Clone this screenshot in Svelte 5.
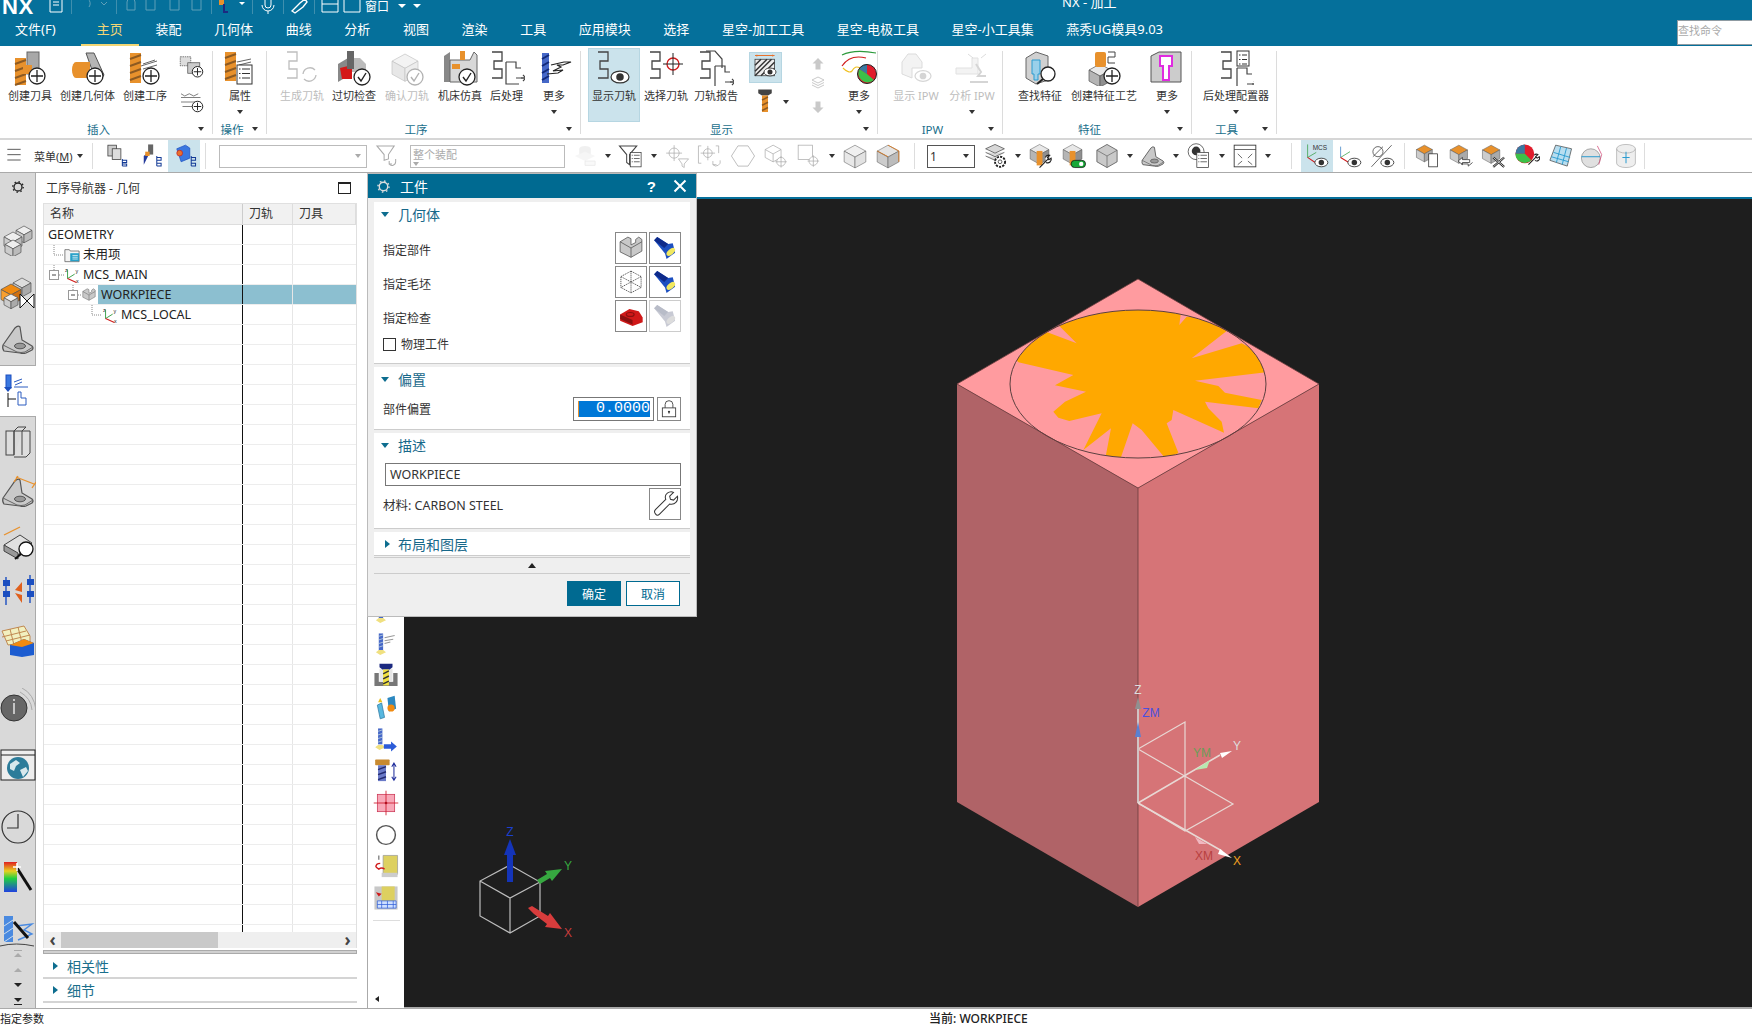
<script>
	// shared pieces for the icon table, everything is drawn on a 36x36 box
	const plus = (x = 25, y = 26, r = 8) =>
		`<circle cx="${x}" cy="${y}" r="${r}" fill="#fff" stroke="#222" stroke-width="1.3"/><path d="M${x - r + 2} ${y}h${2 * r - 4}M${x} ${y - r + 2}v${2 * r - 4}" stroke="#222" stroke-width="1.3"/>`;
	const ok = (x = 26, y = 27, r = 8) =>
		`<circle cx="${x}" cy="${y}" r="${r}" fill="#fff" stroke="#222" stroke-width="1.3"/><path d="M${x - 4} ${y}l3 4 5-8" fill="none" stroke="#222" stroke-width="1.4"/>`;
	const eye = (x = 25, y = 28, r = 9, c = '#333') =>
		`<ellipse cx="${x}" cy="${y}" rx="${r}" ry="${r * 0.66}" fill="#fff" stroke="${c}" stroke-width="1.2"/><circle cx="${x}" cy="${y}" r="${r * 0.42}" fill="${c}"/>`;
	const drill = (x, y, w, h, c = '#e8912c', d = '#8d5a22') => {
		let s = `<rect x="${x}" y="${y}" width="${w}" height="${h}" fill="${c}"/>`;
		for (let i = 2; i < h - 2; i += 7) {
			s += `<path d="M${x} ${y + i + 4}L${x + w} ${y + i}" stroke="${d}" stroke-width="2"/>`;
		}
		return s;
	};
	const zig = (x = 2, y = 1, s = 1) =>
		`<path transform="translate(${x} ${y}) scale(${s})" d="M1 1h10v9H3v8h8v9H1" fill="none" stroke="#444" stroke-width="1.3"/>`;
	const box = (x, y, s, t = '#e8e8e8', l = '#b5b5b5', r = '#8f8f8f') =>
		`<path d="M${x} ${y}l${s} ${s * 0.55}-${s} ${s * 0.55}-${s}-${s * 0.55}z" fill="${t}" stroke="#555" stroke-width=".7"/><path d="M${x - s} ${y + s * 0.55}v${s}l${s} ${s * 0.55}v-${s}z" fill="${l}" stroke="#555" stroke-width=".7"/><path d="M${x + s} ${y + s * 0.55}v${s}l-${s} ${s * 0.55}v-${s}z" fill="${r}" stroke="#555" stroke-width=".7"/>`;
	const wire = (x, y, s, c = '#444') =>
		`<path d="M${x} ${y}l${s} ${s * 0.55}v${s}l-${s} ${s * 0.55}-${s}-${s * 0.55}v-${s}zM${x - s} ${y + s * 0.55}l${s} ${s * 0.55}l${s}-${s * 0.55}M${x} ${y + s * 1.1}v${s}" fill="none" stroke="${c}" stroke-width="1"/>`;
	const list = (x, y, w = 13, h = 17) =>
		`<rect x="${x}" y="${y}" width="${w}" height="${h}" fill="#fff" stroke="#333"/><path d="M${x + 5} ${y + 4}h${w - 7}M${x + 5} ${y + 8.5}h${w - 7}M${x + 5} ${y + 13}h${w - 7}M${x + 2} ${y + 4}h1.5M${x + 2} ${y + 8.5}h1.5M${x + 2} ${y + 13}h1.5" stroke="#333"/>`;
	const page = (x, y) =>
		`<path d="M${x} ${y}h10v6h5M${x + 15} ${y + 16}l6-0M${x} ${y}v22h13" fill="none" stroke="#444" stroke-width="1.2"/><path d="M${x + 10} ${y + 16}h10m-3-3l3 3-3 3" fill="none" stroke="#444" stroke-width="1.2"/>`;
	const bracket = `<path d="M3 24L15 7q3-3 5-1l2 13 10 6q2 2 0 4l-6 3q-3 1-6 0L4 30q-2-2-1-6z" fill="#c9c9c9" stroke="#555" stroke-width="1.2"/><path d="M3 24l14 7q4 1 8 0l8-5" fill="none" stroke="#666"/><ellipse cx="20" cy="25" rx="5.5" ry="2.8" fill="#999" stroke="#555"/>`;
	const torch = (body = '#1c4fc0', dark = '#0e2a8a', face = '#f1e860') =>
		`<path d="M4 8l4-4 14 9 6-1 3 12-11 8-2-7z" fill="${body}"/><path d="M4 8l4-4 14 9-5 5z" fill="${dark}"/><ellipse cx="25.5" cy="23" rx="6.5" ry="3.5" transform="rotate(-40 25.5 23)" fill="${face}"/>`;
	const axesPart = `<path d="M8 26V6M8 26l16-10" stroke="#2c9a3c" stroke-width="2" fill="none"/><path d="M8 26l20 9" stroke="#d01c1c" stroke-width="2.4"/><g font-family="Liberation Sans" font-size="12" fill="#222"><text x="2" y="11">z</text><text x="26" y="14">y</text><text x="27" y="35">x</text></g>`;

	const icons = {
		createTool: drill(3, 8, 11, 27) + `<rect x="15" y="2" width="12" height="22" fill="#a8a8a8" stroke="#666"/><rect x="11" y="15" width="9" height="9" fill="#e8912c"/>` + plus(),
		createGeom: `<path d="M16 3h8l10 22-7 9z" fill="#b5b5b5" stroke="#555"/><path d="M6 12h14v16H6a4 8 0 010-16z" fill="#e8912c"/>` + plus(),
		createOp: drill(3, 3, 11, 30) + `<path d="M14 16l16-5M16 19l14-4M16 14l12-4" stroke="#666"/>` + plus(24, 26),
		addA: `<rect x="3" y="5" width="14" height="12" fill="#ddd" stroke="#555" stroke-dasharray="2 1"/><rect x="13" y="13" width="16" height="14" fill="#ccc" stroke="#555"/>` + plus(26, 25, 7),
		addB: `<path d="M4 9l5 3 6-3 6 3 6-3M4 14h26M4 20h26M6 26h16" fill="none" stroke="#555"/>` + plus(26, 26, 7),
		attr: drill(3, 2, 11, 29) + `<path d="M15 12l14-3M17 15l12-3" stroke="#666"/>` + list(15, 15, 15, 19),
		genPath: zig(2, 1) + `<path d="M19 24a7 7 0 0112-4m1 5a7 7 0 01-12 4" fill="none" stroke="#444" stroke-width="1.3"/>`,
		gouge: `<path d="M2 14l10-6v18l-10 6z" fill="#888"/><path d="M12 8h12l6 6v8H12z" fill="#bbb"/><path d="M4 18l12-3v14H6z" fill="#d41818"/><rect x="11" y="1" width="7" height="18" fill="#666"/>` + ok(),
		verify: box(16, 4, 13, '#ddd', '#bbb', '#ccc') + ok(),
		machine: `<path d="M2 6l6-4v30H2z" fill="#888"/><path d="M8 10h20l4-8 3 3v27H8z" fill="#d8d8d8" stroke="#666"/><rect x="18" y="1" width="5" height="9" fill="#e8912c"/><rect x="10" y="14" width="8" height="5" fill="#e8912c"/>` + ok(25, 27),
		post: zig(2, 1) + page(17, 12),
		more: drill(6, 3, 7, 30, '#4668c8', '#122a7a') + `<path d="M15 15l13-3h7l-8 3h-6l4 2-8 4 10-1-5 3-11 1" fill="none" stroke="#222" stroke-width="1.2"/>`,
		showPath: zig(1, 1) + eye(24, 27),
		selPath: zig(1, 1) + `<circle cx="25" cy="14" r="6" fill="none" stroke="#d01c1c" stroke-width="1.3"/><path d="M15 14h20M25 3v22" stroke="#222"/>`,
		report: zig(1, 1) + `<path d="M8 1h9l7 8v9" fill="none" stroke="#444" stroke-width="1.2"/>` + page(17, 16),
		viewHatch: `<path d="M4 2h26" stroke="#e8712c" stroke-width="1.4"/><path d="M4 2l3-1.5v3zM30 2l-3-1.5v3z" fill="#e8712c"/><rect x="4" y="7" width="26" height="22" fill="#eee" stroke="#333"/><path d="M4 15l8-8M4 23l16-16M4 29l22-22M12 29l18-18M20 29l10-10" stroke="#333" stroke-width="2"/>` + eye(24, 24, 8),
		toolSmall: `<path d="M7 2h18v5l-5 3H12l-5-3z" fill="#444"/>` + drill(12, 10, 8, 22),
		upArrow: `<path d="M18 4l11 11h-6v12H13V15H7z" fill="#c9c9c9"/>`,
		downArrow: `<path d="M18 32L7 21h6V9h10v12h6z" fill="#c9c9c9"/>`,
		layersGrey: `<path d="M18 6l12 6-12 6-12-6zM6 17l12 6 12-6M6 22l12 6 12-6" fill="none" stroke="#bbb" stroke-width="1.6"/>`,
		morePie: `<path d="M1 5q12-6 34-2" fill="none" stroke="#2c9a3c" stroke-width="1.2"/><path d="M1 16q8-12 24-8" fill="none" stroke="#d01c1c" stroke-width="1.2"/><path d="M2 18q6 6 9 3 3-6 8-3" fill="none" stroke="#f0c020" stroke-width="1.2"/><circle cx="26" cy="24" r="9.5" fill="#e01c2c"/><path d="M26 24L18 19a9.5 9.5 0 018-5z" fill="#3a78a0"/><path d="M26 24L18 19a9.5 9.5 0 0015 11z" fill="#3cc048"/><circle cx="26" cy="24" r="9.5" fill="none" stroke="#222"/>`,
		showIpw: `<path d="M4 24V12l6-8h8l6 8v6H14v10z" fill="#ddd" stroke="#999"/>` + eye(25, 26, 8, '#888'),
		analyseIpw: `<path d="M2 18h16V8h6v16H2z" fill="#ddd" stroke="#aaa"/><path d="M14 4l5 4M32 4l-5 4" stroke="#999"/><path d="M22 14l5 8-3 4h8M16 32h18" fill="none" stroke="#888" stroke-width="2"/>`,
		findFeat: `<path d="M4 8l10-6 12 4v24L14 34 4 28z" fill="#d0d0d0" stroke="#666"/><path d="M10 10h8v14h-2v6h-4v-6h-2z" fill="#9ad0ea" stroke="#2c9cd0"/><circle cx="26" cy="24" r="7" fill="#fff" stroke="#222" stroke-width="1.3"/><path d="M21 29l-6 5" stroke="#222" stroke-width="2"/>`,
		createFeat: box(14, 14, 11) + `<rect x="9" y="2" width="11" height="15" rx="2" fill="#e8912c"/><path d="M22 2h7v5h-7v6h7" fill="none" stroke="#444"/>` + plus(26, 26, 8),
		moreFeat: `<path d="M2 6l8-4h22v30H2z" fill="#ccc" stroke="#555"/><path d="M11 6h12v10h-3v14h-6V16h-3z" fill="#fff" stroke="#e02ce0" stroke-width="2"/>`,
		postConf: zig(2, 1) + list(19, 1, 12, 15) + page(19, 18),
		menu: `<path d="M2 8h20M2 16h20M2 24h20" stroke="#333" stroke-width="1.2"/>`,
		navA: `<rect x="4" y="3" width="12" height="15" fill="#ccc" stroke="#333"/><rect x="10" y="8" width="12" height="15" fill="#ddd" stroke="#333"/><path d="M24 22v10M24 24h6v3h-6M24 29h6v3h-6" fill="none" stroke="#123a96" stroke-width="1.4"/>`,
		navB: `<path d="M8 18l7-6v4l-7 14z" fill="#243a9a"/><rect x="14" y="2" width="7" height="14" fill="#666"/><rect x="10" y="12" width="6" height="6" fill="#e8912c"/><path d="M26 18v14M26 20h6v4h-6M26 28h6v4h-6" fill="none" stroke="#123a96" stroke-width="1.4"/>`,
		navC: `<path d="M8 8l12-5 6 4v14l-12 5z" fill="#3a78e0" stroke="#1c4fc0"/><circle cx="12" cy="14" r="4" fill="#e8712c" stroke="#c82020"/><path d="M28 18v14M28 20h6v4h-6M28 28h6v4h-6" fill="none" stroke="#123a96" stroke-width="1.4"/>`,
		funnelRe: `<path d="M4 4h24L20 16v6l-6 2v-8z" fill="none" stroke="#aaa" stroke-width="1.4"/><path d="M30 22v4a5 5 0 01-9 3m0-4v4h4" fill="none" stroke="#aaa" stroke-width="1.4"/>`,
		cylGrey: `<path d="M10 8a8 4 0 0116 0v10H10z" fill="#d5d5d5"/><path d="M4 18l14-6 14 6-14 7z" fill="#e4e4e4"/><path d="M18 25h14v6H18z" fill="#eee" stroke="#bbb"/>`,
		funnelList: `<path d="M2 4h24L16 16v14l-4-3V16z" fill="#fff" stroke="#444" stroke-width="1.4"/>` + list(17, 13, 15, 20),
		targetFunnel: `<circle cx="14" cy="14" r="7" fill="none" stroke="#aaa"/><path d="M3 14h22M14 3v22M20 22h14l-6 7v5l-3-2v-3z" fill="none" stroke="#aaa"/>`,
		targetUndo: `<path d="M6 4H2v24h4M26 4h4v10" fill="none" stroke="#aaa"/><circle cx="15" cy="14" r="6" fill="none" stroke="#aaa"/><path d="M5 14h20M15 4v20M32 24a6 6 0 01-10 6m0-5v5h5" fill="none" stroke="#aaa"/>`,
		hexa: `<path d="M11 4h14l9 14-9 14H11L2 18z" fill="none" stroke="#bbb" stroke-width="1.3"/>`,
		cubeTarget: wire(14, 3, 11, '#aaa') + `<circle cx="25" cy="26" r="6" fill="#fff" stroke="#aaa"/><path d="M17 26h16M25 18v16" stroke="#aaa"/>`,
		squareTarget: `<rect x="3" y="3" width="20" height="20" fill="none" stroke="#aaa"/><circle cx="24" cy="25" r="6" fill="#fff" stroke="#aaa"/><path d="M16 25h16M24 17v16" stroke="#aaa"/>`,
		glassCube: box(18, 3, 15, '#f0f0f0', '#e8e8e8', '#e2e2e2'),
		isoCube: box(18, 3, 15, '#e4e4e4', '#ccc', '#bcbcbc') + `<path d="M18 3l15 8v15M18 19L3 11" fill="none" stroke="#d87820" stroke-width="1.2"/>`,
		layerGear: `<path d="M18 2l13 6-13 6-13-6zM5 13l13 6 13-6M5 18l13 6 8-4" fill="#d8d8d8" stroke="#444" stroke-width="1"/><circle cx="25" cy="26" r="7" fill="#fff" stroke="#222" stroke-width="2.6" stroke-dasharray="3 1.6"/><circle cx="25" cy="26" r="2.6" fill="#fff" stroke="#222"/>`,
		holeWrench: box(16, 2, 13) + `<rect x="12" y="11" width="8" height="20" fill="#e8912c"/><path d="M16 34l12-12M24 20a5 5 0 016-3l-3 3 2 3 3-2a5 5 0 01-7 6" fill="#fff" stroke="#222" stroke-width="1.6"/>`,
		holeGreen: box(16, 2, 13) + `<rect x="12" y="11" width="8" height="20" fill="#e8912c"/><rect x="14" y="24" width="20" height="10" rx="5" fill="#18a838" stroke="#111"/><circle cx="28" cy="29" r="3" fill="#fff"/>`,
		hexSolid: `<path d="M18 2l14 8v16l-14 8-14-8V10z" fill="#c9c9c9" stroke="#444"/><path d="M4 10l14 8 14-8M18 18v16" fill="none" stroke="#666"/>`,
		bracket,
		eyeList: `<circle cx="14" cy="12" r="11" fill="#fff" stroke="#333"/><circle cx="14" cy="11" r="6" fill="#333"/>` + list(15, 13, 16, 21),
		fit: `<rect x="3" y="3" width="30" height="30" fill="#fff" stroke="#333" stroke-width="1.2"/><path d="M3 9h30M8 15l6 6M28 15l-6 6M8 30l6-5M28 30l-6-5" stroke="#333"/>`,
		mcsEye: `<path d="M5 2v18l12-7" fill="none" stroke="#2c9a3c"/><path d="M5 20l12 8" stroke="#d01c1c" stroke-width="1.4"/>` + eye(24, 27) + `<text x="12" y="10" font-size="9" font-family="Liberation Sans" fill="#333">MCS</text>`,
		wcsEye: `<path d="M5 5v15" stroke="#2c78c0"/><path d="M5 20l13-8" stroke="#2c9a3c"/><path d="M5 20l13 8" stroke="#d01c1c" stroke-width="1.4"/>` + eye(24, 27),
		slashEye: `<circle cx="11" cy="12" r="7" fill="none" stroke="#333"/><path d="M4 19L18 5M2 33L30 3" stroke="#333"/>` + eye(24, 27),
		cubeCopy: box(13, 3, 11, '#e8912c', '#ccc', '#aaa') + `<rect x="19" y="15" width="12" height="18" fill="#fff" stroke="#222"/>`,
		cubeSwap: box(15, 3, 12, '#e8912c', '#ccc', '#aaa') + `<path d="M14 25l6-5v3h10v4H20v3zM34 27l-6 5v-3H18" fill="#fff" stroke="#222"/>`,
		cubeDel: box(14, 3, 12, '#e8912c', '#ccc', '#aaa') + `<path d="M17 20l15 13M32 20L17 33" stroke="#222" stroke-width="3"/><path d="M17 20l15 13M32 20L17 33" stroke="#fff" stroke-width="1"/>`,
		pieWrench: `<circle cx="15" cy="15" r="13" fill="#e01c2c"/><path d="M15 15L15 2a13 13 0 00-13 13z" fill="#3a78a0"/><path d="M15 15H2a13 13 0 0022 9z" fill="#3cc048"/><path d="M20 30l10-10m-2-3a4 4 0 015-1l-3 3 2 2 3-2a4 4 0 01-6 5" fill="#fff" stroke="#222" stroke-width="1.5"/>`,
		surface: `<path d="M12 3l22 5-6 24-24-8z" fill="#b8def0" stroke="#444"/><path d="M9 13l23 7M6 19l24 7M19 5l-6 22M27 7l-6 23" stroke="#2c9cd0" stroke-width="1.3"/>`,
		sphere: `<circle cx="15" cy="21" r="13" fill="#e0e0e0" stroke="#888"/><path d="M2 19h26" stroke="#2c9cd0" stroke-width="1.4"/><path d="M24 4l6 12-4 14" fill="none" stroke="#d04070"/>`,
		cyl: `<path d="M5 8a13 6 0 0126 0v20a13 6 0 01-26 0z" fill="#eee" stroke="#aaa"/><path d="M5 8a13 6 0 0026 0" fill="none" stroke="#aaa"/><path d="M18 12v16M13 20h10" stroke="#2c9cd0" stroke-width="1.4"/>`,
		gear: `<circle cx="18" cy="18" r="8" fill="none" stroke="#222" stroke-width="2.6"/><circle cx="18" cy="18" r="10.5" fill="none" stroke="#222" stroke-width="2.6" stroke-dasharray="3 5.2"/>`,
		cubes: box(24, 6, 8, '#eee', '#ccc', '#bbb') + box(13, 12, 9, '#eee', '#ccc', '#bbb') + box(13, 20, 8, '#eee', '#ccc', '#bbb'),
		orangeCube: box(22, 2, 9, '#ddd', '#ccc', '#aaa') + box(11, 8, 10, '#f08a10', '#f8a030', '#d07010') + box(11, 18, 7, '#eee', '#ccc', '#aaa') + `<path d="M20 18l14 14V18L20 32z" fill="#fff" stroke="#111"/>`,
		navActive: `<rect x="6" y="2" width="5" height="13" fill="#3a78e0" stroke="#1c4fc0"/><path d="M8 19l-4-5h8z" fill="#1c4fc0"/><path d="M14 9l8-3M15 12l7-3M14 14h14" stroke="#2c5cc0"/><path d="M8 20v14M8 26h8" fill="none" stroke="#111"/><path d="M18 32V19h3v6h5v7z" fill="none" stroke="#2c5cc0"/>`,
		books: `<rect x="6" y="8" width="8" height="24" fill="#ddd" stroke="#444"/><path d="M14 8l4-4h8l-4 4H14zM14 32V8M22 8h8v22l-4 4H14" fill="#ddd" stroke="#444"/><path d="M22 8v24" stroke="#444"/>`,
		gageX: bracket + `<path d="M16 3l18 7M14 8l4-6M32 14l4-6" fill="none" stroke="#e8912c" stroke-width="1.3"/>`,
		gageLens: `<path d="M4 20l16-10 12 8-14 12z" fill="#e0e0e0" stroke="#444"/><path d="M4 20v6l14 8v-6z" fill="#999" stroke="#444"/><path d="M4 10l16-8" stroke="#e8912c" stroke-width="1.3"/><circle cx="26" cy="24" r="7" fill="#fff" stroke="#111" stroke-width="1.3"/><path d="M21 29l-6 5" stroke="#111" stroke-width="2"/>`,
		flow: `<path d="M6 4v28M30 2v28" stroke="#1c4fc0" stroke-width="1.4"/><rect x="3" y="7" width="7" height="6" fill="#1c4fc0"/><rect x="3" y="18" width="7" height="6" fill="#1c4fc0"/><rect x="27" y="6" width="7" height="6" fill="#1c4fc0"/><rect x="27" y="18" width="7" height="6" fill="#1c4fc0"/><path d="M22 9l-7 8 7 2zM15 20l7 2v8z" fill="#e0601c"/>`,
		tableBox: `<path d="M2 8l22-5 6 10v6L8 22z" fill="#f2f0c0" stroke="#c08850"/><path d="M2 14l24-6M6 18l24-6M10 6l4 16M18 4l4 16" stroke="#c08850"/><path d="M10 22l14-6 10 4v12L22 34l-12-2z" fill="#1c5cd0"/><path d="M10 22l14-6 10 4-12 4z" fill="#f08a10"/>`,
		info: `<circle cx="14" cy="20" r="13" fill="#666" stroke="#333"/><path d="M14 15v11M14 11v2" stroke="#ddd" stroke-width="1.6"/><path d="M20 4q11 6 12 18M22 0q12 6 14 22" fill="none" stroke="#aaa"/>`,
		globe: `<rect x="1" y="2" width="34" height="30" fill="#eee" stroke="#222"/><path d="M1 7h34" stroke="#222"/><circle cx="18" cy="20" r="11" fill="#2c7c9a"/><path d="M10 16l6-4 4 3-4 3-2 5-4-2zM20 22l6-3 2 4-5 6z" fill="#d8e8ec"/>`,
		clock: `<circle cx="18" cy="18" r="16" fill="none" stroke="#333" stroke-width="1.2"/><path d="M18 5v14H7" fill="none" stroke="#333" stroke-width="1.2"/>`,
		rainbow: `<defs><linearGradient id="rb" x2="0" y2="1"><stop offset="0" stop-color="#e02020"/><stop offset=".3" stop-color="#e8d020"/><stop offset=".55" stop-color="#20d040"/><stop offset="1" stop-color="#2040e0"/></linearGradient></defs><rect x="4" y="2" width="13" height="30" fill="url(#rb)"/><path d="M17 8l14 22" stroke="#111" stroke-width="3"/><path d="M17 3v8M13 7h8" stroke="#fff" stroke-width="1.6"/>`,
		wandPath: `<rect x="4" y="4" width="9" height="26" fill="#4a8ae0"/><path d="M4 30l9-6M4 22l9-6M4 14l9-6" stroke="#cde"/><path d="M16 14l16-2-8 6 8 4-14 6" fill="none" stroke="#4a8ae0" stroke-width="1.4"/><path d="M0 34q16-4 34 0" fill="none" stroke="#444"/><path d="M14 10l14 16" stroke="#111" stroke-width="3"/>`,
		wcMill: `<path d="M8 2h6v24H8z" fill="#4668c8"/><path d="M8 6l6-2M8 11l6-2M8 16l6-2M8 21l6-2" stroke="#cdd"/><path d="M16 8l14-3M16 12l12-2M16 16l8-2" stroke="#999" stroke-width="1.4"/><path d="M4 28l6 4 8-4-4-3H8z" fill="#f0e080"/>`,
		pocketDrill: `<path d="M2 14h6v12h20V14h6v18H2z" fill="#777"/><rect x="9" y="8" width="18" height="18" fill="#e6e6e6"/><path d="M9 1h18v5l-4 3H13L9 6z" fill="#1c2a80"/>` + drill(14, 9, 8, 22, '#f0e040', '#333'),
		tiltTool: `<path d="M6 14l6-3 4 20-6 2z" fill="#58b8e0" stroke="#2c78a0"/><path d="M20 4l10-3 2 18-10 4z" fill="#2c88c0"/><circle cx="25" cy="18" r="5" fill="#f08a10"/><path d="M10 4l3 6H7z" fill="#e8c020"/>`,
		millArrow: `<path d="M7 2h6v22H7z" fill="#4668c8"/><path d="M7 6l6-2M7 11l6-2M7 16l6-2M7 21l6-2" stroke="#cdd"/><path d="M3 28l6 4 8-4-4-3H7z" fill="#f0e080"/><path d="M15 24h10v-4l8 7-8 7v-4H15z" fill="#2c5cd8"/>`,
		toolHeight: `<rect x="3" y="2" width="20" height="8" rx="1" fill="#c88a30"/>` + drill(7, 10, 11, 22, '#6a7ac8', '#222a70') + `<path d="M29 8v22M26 12l3-5 3 5M26 26l3 5 3-5" fill="none" stroke="#1c2a9a" stroke-width="1.4"/>`,
		crosshair: `<rect x="6" y="6" width="24" height="24" fill="#f8a8b8" stroke="#c83050"/><path d="M1 18h34M18 1v34" stroke="#d01c30" stroke-width="1.2"/><circle cx="18" cy="18" r="1.8" fill="#b01020"/>`,
		ring: `<circle cx="18" cy="18" r="13" fill="#fff" stroke="#555" stroke-width="2"/>`,
		machBack: `<path d="M14 2h20v26H14z" fill="#ddd060" stroke="#999"/><path d="M12 26h22v6H12z" fill="#ccc"/><path d="M8 2v6" stroke="#888" stroke-width="2"/><path d="M4 18q0-5 6-5M4 18l4 3q4-3 8 0" fill="none" stroke="#d01c1c" stroke-width="2"/>`,
		machGrid: `<rect x="2" y="2" width="32" height="32" fill="#c8c8c8"/><path d="M12 2h18v20H12z" fill="#ddd060"/><path d="M6 22h26v10H6z" fill="#cfe0ff" stroke="#2c5cd8"/><path d="M12 22v10M20 22v10M28 22v10M6 27h26" stroke="#2c5cd8"/><path d="M4 10l8 2-4 4" fill="#d01c1c"/>`,
		partCube: `<path d="M4 10l10-6 4 2v8l6-3V7l4-3 4 3v15l-14 8-14-7z" fill="#c9c9c9" stroke="#555"/><path d="M4 10l14 8v12M18 18l14-8" fill="none" stroke="#555"/>`,
		wireCube: `<path d="M18 4l13 7v14l-13 7-13-7V11zM5 11l26 14M31 11L5 25M18 4v28" fill="none" stroke="#333" stroke-dasharray="1.6 1"/>`,
		torchBlue: torch(),
		torchGrey: torch('#c8cad4', '#b8bcc8', '#dcdcdc'),
		redPart: `<path d="M4 16l12-7 12 3 5 8v6l-13 5-16-7z" fill="#d01818"/><path d="M4 16l16 7v6L4 22z" fill="#8a1010"/><ellipse cx="17" cy="16" rx="5" ry="2.5" fill="none" stroke="#8a1010" stroke-width="1.6"/>`,
		wrench: `<path d="M6 31q-3-3 0-6l13-13q-2-5 2-8t8-1l-5 5 1 4 4 1 5-5q1 5-2 8t-8 2L11 31q-3 3-5 0z" fill="#fff" stroke="#333" stroke-width="1.3"/>`,
		lock: `<path d="M11 16v-6a7 7 0 0114 0v6" fill="none" stroke="#333" stroke-width="1.5"/><rect x="6" y="16" width="24" height="16" fill="#fff" stroke="#333" stroke-width="1.5"/><circle cx="18" cy="23" r="2" fill="#333"/><path d="M18 24v3" stroke="#333"/>`,
		folder: `<path d="M2 6h10l2 3h20v24H2z" fill="#f4f4f4" stroke="#555" stroke-width="1.6"/><rect x="14" y="14" width="20" height="18" fill="#28a0c8"/><path d="M19 19h12M19 23h12M19 27h12" stroke="#fff" stroke-width="1.6"/>`,
		axes: axesPart
	};

	const ribbon = [
		{ label: '插入', w: 213, pad: 4, items: [
			{ n: 'createTool', t: '创建刀具', w: 52 },
			{ n: 'createGeom', t: '创建几何体', w: 63 },
			{ n: 'createOp', t: '创建工序', w: 52 },
			{ stack: ['addA', 'addB'], w: 40 }
		] },
		{ label: '操作', w: 54, pad: 0, items: [{ n: 'attr', t: '属性', w: 54, caret: true }] },
		{ label: '工序', w: 314, pad: 9, items: [
			{ n: 'genPath', t: '生成刀轨', w: 52, off: true },
			{ n: 'gouge', t: '过切检查', w: 52 },
			{ n: 'verify', t: '确认刀轨', w: 54, off: true },
			{ n: 'machine', t: '机床仿真', w: 52 },
			{ n: 'post', t: '后处理', w: 41 },
			{ n: 'more', t: '更多', w: 54, caret: true }
		] },
		{ label: '显示', w: 297, pad: 7, items: [
			{ n: 'showPath', t: '显示刀轨', w: 52, on: true },
			{ n: 'selPath', t: '选择刀轨', w: 52 },
			{ n: 'report', t: '刀轨报告', w: 48 },
			{ viewStack: true, w: 50 },
			{ arrows: true, w: 56 },
			{ n: 'morePie', t: '更多', w: 26, caret: true }
		] },
		{ label: 'IPW', w: 125, pad: 12, items: [
			{ n: 'showIpw', t: '显示 IPW', w: 52, off: true },
			{ n: 'analyseIpw', t: '分析 IPW', w: 60, off: true, caret: true }
		] },
		{ label: '特征', w: 189, pad: 11, items: [
			{ n: 'findFeat', t: '查找特征', w: 52 },
			{ n: 'createFeat', t: '创建特征工艺', w: 76 },
			{ n: 'moreFeat', t: '更多', w: 50, caret: true }
		] },
		{ label: '工具', w: 85, pad: 8, items: [{ n: 'postConf', t: '后处理配置器', w: 72, caret: true }] }
	];

	const menus = ['主页', '装配', '几何体', '曲线', '分析', '视图', '渲染', '工具', '应用模块', '选择', '星空-加工工具', '星空-电极工具', '星空-小工具集', '燕秀UG模具9.03'];

	// toolbar strip: i = icon, c = caret, box = combo
	const bar = [
		{ w: 113, pad: 12, items: [{ i: 'navA' }, { i: 'navB' }, { i: 'navC', on: true }] },
		{ w: 709, pad: 13, items: [
			{ box: '', w: 148, off: true }, { i: 'funnelRe' }, { box: '整个装配', w: 155, off: true, lead: true },
			{ i: 'cylGrey', off: true }, { c: 1 }, { i: 'funnelList' }, { c: 1 },
			{ i: 'targetFunnel' }, { i: 'targetUndo' }, { i: 'hexa' }, { i: 'cubeTarget' }, { i: 'squareTarget' }, { c: 1 },
			{ i: 'glassCube' }, { i: 'isoCube' }
		] },
		{ w: 377, pad: 12, items: [
			{ box: '1', w: 48, dark: true }, { i: 'layerGear' }, { c: 1 }, { i: 'holeWrench' }, { i: 'holeGreen' }, { i: 'hexSolid' }, { c: 1 },
			{ i: 'bracket' }, { c: 1 }, { i: 'eyeList' }, { c: 1 }, { i: 'fit' }, { c: 1 }
		] },
		{ w: 113, pad: 12, items: [{ i: 'mcsEye', on: true }, { i: 'wcsEye' }, { i: 'slashEye' }] },
		{ w: 240, pad: 10, items: [{ i: 'cubeCopy' }, { i: 'cubeSwap' }, { i: 'cubeDel' }, { i: 'pieWrench' }, { i: 'surface' }, { i: 'sphere' }, { i: 'cyl' }] }
	];

	const rail = [
		{ n: 'gear', h: 28, s: 18 }, { n: 'cubes', h: 74 }, { n: 'orangeCube', h: 38 }, { n: 'bracket', h: 52 },
		{ n: 'navActive', h: 52, active: true }, { n: 'books', h: 48 }, { n: 'gageX', h: 54 }, { n: 'gageLens', h: 48 },
		{ n: 'flow', h: 48 }, { n: 'tableBox', h: 52 }, { n: 'info', h: 78 }, { n: 'globe', h: 42 }, { n: 'clock', h: 80 },
		{ n: 'rainbow', h: 22 }, { h: 24 }, { n: 'wandPath', h: 34 }
	];

	const mini = ['wcMill', 'wcMill', 'pocketDrill', 'tiltTool', 'millArrow', 'toolHeight', 'crosshair', 'ring', 'machBack', 'machGrid'];

	const tree = [
		{ name: 'GEOMETRY', w: 1 },
		{ name: '未用项', w: 20, icon: 'folder', d: 'M10 0V10H20' },
		{ name: 'MCS_MAIN', w: 20, icon: 'axes', box: 10, d: 'M10 0V6M15 10H20' },
		{ name: 'WORKPIECE', w: 37, icon: 'partCube', box: 29, d: 'M29 0V6M34 10H37', sel: true },
		{ name: 'MCS_LOCAL', w: 58, icon: 'axes', d: 'M48 0V10H58' },
		...Array.from({ length: 31 }, () => ({ name: '', w: 4 }))
	];

	// outer corners run past the ellipse, the clip below trims them
	const burst = '355,195 400,130 590,120 725,140 718,195 740,170 800,170 860,213 755,295 905,250 960,280 990,335 765,362 835,378 855,398 965,420 955,445 795,425 805,445 845,485 852,518 700,450 695,480 680,490 715,578 680,600 605,510 578,490 540,600 495,600 513,505 430,570 485,460 388,483 355,473 340,455 375,425 438,395 345,376 400,345 235,307 200,260 322,217 410,250';
</script>

{#snippet ic(name, size = 36)}
	<svg class="ic" width={size} height={size} viewBox="0 0 36 36">{@html icons[name]}</svg>
{/snippet}

<div class="app">
	<div class="titlebar">
		<b class="logo">NX</b>
		<div class="quick">
			<svg width="20" height="14" viewBox="0 0 20 14"><path d="M4 -4h12v16H4zM7 2h6M7 5h6" fill="none" stroke="#fff"/></svg>
			<i class="qsep"></i>
			<svg width="34" height="14" viewBox="0 0 34 14"><path d="M3 0a5 5 0 019 7M24 2l3 3 3-3" fill="none" stroke="#5f9fb8"/></svg>
			<i class="qsep"></i>
			<svg width="84" height="14" viewBox="0 0 84 14"><path d="M5 2a4 4 0 018 0v8H5zM24 -2h9v12H24zM48 -2h9v12H48zM70 -2h9v12H70z" fill="none" stroke="#5f9fb8"/></svg>
			<i class="qsep"></i>
			<svg width="30" height="14" viewBox="0 0 30 14"><rect x="2" y="0" width="5" height="5" fill="#e8912c"/><path d="M7 4v8h4" stroke="#1c2a80" stroke-width="2" fill="none"/><path d="M22 2l3 3 3-3z" fill="#fff"/></svg>
			<i class="qsep"></i>
			<svg width="20" height="14" viewBox="0 0 20 14"><rect x="7" y="-3" width="6" height="11" rx="3" fill="none" stroke="#fff"/><path d="M4 5a6 6 0 0012 0M10 11v3" fill="none" stroke="#fff"/></svg>
			<i class="qsep"></i>
			<svg width="20" height="14" viewBox="0 0 20 14"><path d="M3 11l8-8 5-4 2 3-4 5-8 6z" fill="none" stroke="#fff" stroke-width="1.4"/></svg>
			<i class="qsep"></i>
			<svg width="42" height="14" viewBox="0 0 42 14"><path d="M2 -2h16v14H2zM2 4h16M24 -2h16v14H24z" fill="none" stroke="#fff"/></svg>
			<span class="qtext">窗口</span>
			<i class="wcaret"></i>
			<i class="wcaret"></i>
		</div>
		<span class="apptitle">NX - 加工</span>
	</div>

	<nav class="menubar">
		<span class="filemenu">文件(F)</span>
		{#each menus as m, i}
			<span class="tab" class:picked={i === 0}>{m}</span>
		{/each}
		<span class="search">查找命令</span>
	</nav>

	<div class="ribbon">
		{#each ribbon as g}
			<section class="grp" style:width="{g.w}px">
				<div class="grp-body" style:padding-left="{g.pad}px">
					{#each g.items as b}
						{#if b.stack}
							<div class="rstack" style:width="{b.w}px">
								{#each b.stack as s}{@render ic(s, 27)}{/each}
							</div>
						{:else if b.viewStack}
							<div class="rstack view" style:width="{b.w}px">
								<span class="pressed">{@render ic('viewHatch', 27)}</span>
								<span class="toolrow">{@render ic('toolSmall', 27)}<i class="caret"></i></span>
							</div>
						{:else if b.arrows}
							<div class="rarrows" style:width="{b.w}px">
								{@render ic('upArrow', 18)}
								{@render ic('layersGrey', 18)}
								{@render ic('downArrow', 18)}
							</div>
						{:else}
							<div class="rbtn" class:on={b.on} class:off={b.off} style:width="{b.w}px">
								<span class="rico">{@render ic(b.n)}</span>
								<span class="rlabel">{b.t}</span>
								{#if b.caret}<i class="caret"></i>{/if}
							</div>
						{/if}
					{/each}
				</div>
				<div class="grp-foot"><span>{g.label}</span><i class="caret"></i></div>
			</section>
		{/each}
	</div>

	<div class="toolbar">
		<div class="tb-menu">
			{@render ic('menu', 24)}
			<span>菜单(<u>M</u>)</span>
			<i class="caret"></i>
		</div>
		{#each bar as g}
			<div class="tb-grp" style:width="{g.w}px" style:padding-left="{g.pad}px">
				{#each g.items as it}
					{#if it.i}
						<span class="tb-i" class:on={it.on} class:off={it.off}>{@render ic(it.i, 26)}</span>
					{:else if it.c}
						<i class="caret"></i>
					{:else}
						<span class="combo" class:off={it.off} class:dark={it.dark} class:lead={it.lead} style:width="{it.w}px">
							<em>{it.box}</em><i class="caret"></i>
						</span>
					{/if}
				{/each}
			</div>
		{/each}
	</div>

	<div class="main">
		<aside class="rail">
			{#each rail as r}
				<div class="rail-i" class:active={r.active} style:height="{r.h}px">
					{#if r.n}{@render ic(r.n, r.s ?? 36)}{/if}
				</div>
			{/each}
			<div class="rail-arrows">
				<span class="a up dim2"></span>
				<span class="a up dim2 short"></span>
				<span class="a dn short"></span>
				<span class="a dn"></span>
			</div>
		</aside>

		<section class="navigator">
			<header class="nav-head">
				<span>工序导航器 - 几何</span>
				<i class="maxbox"></i>
			</header>
			<div class="table">
				<div class="row head">
					<span class="c1">名称</span><span class="c2">刀轨</span><span class="c3">刀具</span>
				</div>
				<div class="rows">
					{#each tree as t}
						<div class="row" class:sel={t.sel}>
							<span class="c1 node">
								<svg class="lead" width={t.w} height="20" viewBox="0 0 {t.w} 20">
									{#if t.d}<path d={t.d} stroke="#888" stroke-dasharray="1 1" fill="none"/>{/if}
									{#if t.box}
										<rect x={t.box - 4.5} y="5.5" width="9" height="9" fill="#fff" stroke="#999"/>
										<path d="M{t.box - 2} 10h4" stroke="#444"/>
									{/if}
								</svg>
								{#if t.icon}{@render ic(t.icon, 16)}{/if}
								<span class="nodetext">{t.name}</span>
							</span>
							<span class="c2"></span><span class="c3"></span>
						</div>
					{/each}
				</div>
				<div class="hscroll">
					<span class="sarrow">&lsaquo;</span>
					<span class="thumb"></span>
					<span class="sarrow right">&rsaquo;</span>
				</div>
			</div>
			<div class="splitter"></div>
			<div class="foldrow"><i class="tri-r"></i>相关性</div>
			<div class="foldrow"><i class="tri-r"></i>细节</div>
		</section>

		<aside class="mini">
			{#each mini as m}
				<span class="mini-i">{@render ic(m, 26)}</span>
			{/each}
			<hr />
			<i class="backtri"></i>
		</aside>

		<div class="viewport">
			<div class="viewtab"></div>
			<svg class="scene" viewBox="404 199 1348 809" width="1348" height="809">
				<defs>
					<clipPath id="topcircle"><ellipse cx="1138" cy="384" rx="128" ry="74"/></clipPath>
				</defs>
				<path d="M957 384L1138 488V907L957 802z" fill="#b06367"/>
				<path d="M1319 384L1138 488V907L1319 802z" fill="#d67477"/>
				<path d="M1138 279L1319 384 1138 488 957 384z" fill="#ff9b9f"/>
				<g clip-path="url(#topcircle)">
					<g transform="translate(940 260) scale(.33333)"><polygon points={burst} fill="#ffa800"/></g>
				</g>
				<ellipse cx="1138" cy="384" rx="128" ry="74" fill="none" stroke="#5c4040"/>
				<path d="M957 384L1138 279 1319 384 1138 488zM1138 488V907" fill="none" stroke="#6a3c3e" stroke-width=".8"/>

				<g fill="none" stroke="#e8d8d4" stroke-width="1.2">
					<path d="M1138 749L1185 722V831M1138 749L1233 804 1185 831 1138 803" />
					<path d="M1138 803V708" stroke="#d0c4c4" stroke-width="2"/>
					<path d="M1138 803L1220 755M1138 803L1222 851" stroke-width="1.6"/>
				</g>
				<path d="M1138 697l3 12h-6z" fill="#909090"/>
				<path d="M1138 722l3 15h-6z" fill="#5a80d0"/>
				<path d="M1195 770l15-10-3 8z" fill="#b8e8b0"/>
				<path d="M1232 751l-12 2 2 5z" fill="#fff"/>
				<path d="M1195 837l12 7-8 0z" fill="#f0b8c0"/>
				<path d="M1232 858l-12-9-2 5z" fill="#fff"/>
				<g class="lbl">
					<text x="1138" y="694" fill="#ddd">Z</text>
					<text x="1151" y="717" fill="#4a50e0">ZM</text>
					<text x="1237" y="750" fill="#ddd">Y</text>
					<text x="1202" y="757" fill="#6c9c58">YM</text>
					<text x="1204" y="860" fill="#b84040">XM</text>
					<text x="1237" y="865" fill="#f0a020">X</text>
				</g>

				<path d="M510 865l30 17v34l-30 17-30-17v-35zM480 881l30 17 30-16M510 898v35" fill="none" stroke="#bdbdbd" stroke-width="1.2"/>
				<path d="M510 839l6 16h-3v27h-6v-27h-3z" fill="#1434b8"/>
				<path d="M562 869l-17 2 2 3-10 6 3 4 10-6 2 3z" fill="#36a840"/>
				<path d="M562 929l-17-2 2-3-13-10-6-6 4-2 16 10 2-3z" fill="#d83c3c"/>
				<g class="lbl">
					<text x="510" y="836" fill="#1c40d0">Z</text>
					<text x="568" y="870" fill="#36a840">Y</text>
					<text x="568" y="937" fill="#c83c3c">X</text>
				</g>
			</svg>
		</div>

		<div class="dialog">
			<header class="dlg-title">
				{@render ic('gear', 19)}
				<span>工件</span>
				<b class="help">?</b>
				<svg width="14" height="14" viewBox="0 0 14 14"><path d="M1.5 1.5l11 11M12.5 1.5l-11 11" stroke="#fff" stroke-width="2"/></svg>
			</header>
			<div class="dlg-body">
				<section class="sec">
					<h4><i class="tri-d"></i>几何体</h4>
					<div class="f-row"><span>指定部件</span><span class="f-btns"><i class="sq">{@render ic('partCube', 28)}</i><i class="sq">{@render ic('torchBlue', 28)}</i></span></div>
					<div class="f-row"><span>指定毛坯</span><span class="f-btns"><i class="sq">{@render ic('wireCube', 28)}</i><i class="sq">{@render ic('torchBlue', 28)}</i></span></div>
					<div class="f-row"><span>指定检查</span><span class="f-btns"><i class="sq">{@render ic('redPart', 28)}</i><i class="sq faded">{@render ic('torchGrey', 28)}</i></span></div>
					<div class="check"><i class="cbox"></i>物理工件</div>
				</section>
				<section class="sec offset">
					<h4><i class="tri-d"></i>偏置</h4>
					<div class="f-row short">
						<span>部件偏置</span>
						<span class="f-btns">
							<span class="num"><span>0.0000</span></span>
							<i class="sq lockbtn">{@render ic('lock', 20)}</i>
						</span>
					</div>
				</section>
				<section class="sec desc">
					<h4><i class="tri-d"></i>描述</h4>
					<div class="desc-input">WORKPIECE</div>
					<div class="f-row"><span class="mat">材料: CARBON STEEL</span><i class="sq">{@render ic('wrench', 28)}</i></div>
				</section>
				<section class="sec collapsed">
					<h4><i class="tri-r"></i>布局和图层</h4>
				</section>
				<div class="lessrow"><i class="tri-u"></i></div>
				<footer class="dlg-foot">
					<span class="btn primary">确定</span>
					<span class="btn">取消</span>
				</footer>
			</div>
		</div>
	</div>

	<footer class="status">
		<span class="hint">指定参数</span>
		<span class="current">当前: WORKPIECE</span>
	</footer>
</div>

<style>
	:global(body) {
		margin: 0;
		background: #fff;
	}

	.app {
		width: 1752px;
		height: 1027px;
		overflow: hidden;
		display: flex;
		flex-direction: column;
		font-family: 'Noto Sans', 'Noto Sans CJK SC', sans-serif;
		font-size: 12px;
		color: #333;
	}

	.ic {
		display: block;
		flex: none;
	}

	/* title + menu */
	.titlebar {
		height: 14px;
		flex: none;
		background: #05709b;
		overflow: hidden;
		display: flex;
		align-items: flex-end;
		color: #fff;
	}

	.logo {
		width: 46px;
		flex: none;
		padding-left: 2px;
		box-sizing: border-box;
		font: bold 22px/20px 'Liberation Sans', sans-serif;
		letter-spacing: 0.5px;
		margin-bottom: -3px;
	}

	.quick {
		display: flex;
		align-items: flex-end;
		gap: 5px;
	}

	.qsep {
		width: 1px;
		height: 14px;
		background: #3f8fae;
	}

	.qtext {
		font-size: 12px;
		line-height: 14px;
		margin: 0 3px 0 -2px;
	}

	.wcaret {
		width: 0;
		height: 0;
		margin: 0 1px 6px;
		border: 4px solid transparent;
		border-top-color: #fff;
		border-bottom: 0;
	}

	.apptitle {
		margin-left: 640px;
		font-size: 13px;
		line-height: 18px;
		margin-bottom: 3px;
		white-space: nowrap;
	}

	.menubar {
		height: 32px;
		flex: none;
		display: flex;
		align-items: stretch;
		background: #05709b;
		color: #fff;
		font-size: 13px;
		line-height: 30px;
	}

	.filemenu {
		flex: none;
		padding: 0 0 0 15px;
		margin-right: 25px;
		font-size: 13px;
		white-space: nowrap;
	}

	.tab {
		flex: none;
		padding: 0 16.3px;
		white-space: nowrap;
	}

	.tab.picked {
		color: #f2d675;
		border-bottom: 2px solid #f2d675;
	}

	.search {
		margin: 6px 0 1px auto;
		width: 75px;
		flex: none;
		box-sizing: border-box;
		background: #fff;
		border: 1px solid #8f9ba2;
		border-right: 0;
		color: #aaa;
		font-size: 11px;
		line-height: 20px;
	}

	/* ribbon */
	.ribbon {
		height: 92px;
		flex: none;
		display: flex;
		background: #fff;
		border-bottom: 2px solid #d6d6d6;
	}

	.grp {
		box-sizing: border-box;
		flex: none;
		display: flex;
		flex-direction: column;
		position: relative;
	}

	.grp::after {
		content: '';
		position: absolute;
		right: 0;
		top: 5px;
		bottom: 4px;
		width: 1px;
		background: #dcdcdc;
	}

	.grp-body {
		height: 76px;
		flex: none;
		display: flex;
		padding-top: 2px;
		box-sizing: border-box;
	}

	.rbtn {
		flex: none;
		box-sizing: border-box;
		display: flex;
		flex-direction: column;
		align-items: center;
		border: 1px solid transparent;
		height: 74px;
	}

	.rico {
		height: 37px;
		padding-top: 1px;
	}

	.rbtn.on {
		background: #cbe3ec;
		border-color: #b6d6e2;
	}

	.rbtn.off .rico,
	.tb-i.off {
		filter: grayscale(1) opacity(0.35);
	}

	.rlabel {
		font-size: 11px;
		line-height: 16px;
		margin-top: 1px;
		white-space: nowrap;
	}

	.rbtn.off .rlabel {
		color: #bdbdbd;
	}

	.caret {
		display: block;
		flex: none;
		width: 0;
		height: 0;
		border: 3.5px solid transparent;
		border-top: 4px solid #333;
		border-bottom: 0;
	}

	.rbtn .caret {
		margin-top: 6px;
	}

	.rstack {
		flex: none;
		display: flex;
		flex-direction: column;
		align-items: center;
		gap: 7px;
		padding-top: 5px;
	}

	.rstack.view {
		gap: 5px;
		padding-top: 4px;
	}

	.pressed {
		background: #cbe3ec;
		border: 1px solid #b6d6e2;
		padding: 1px 2px;
	}

	.toolrow {
		display: flex;
		align-items: center;
		gap: 3px;
		margin-right: -12px;
	}

	.rarrows {
		flex: none;
		display: flex;
		flex-direction: column;
		align-items: center;
		gap: 0;
		padding-top: 8px;
	}

	.rarrows .ic:last-child {
		margin-top: 5px;
	}

	.grp-foot {
		display: flex;
		align-items: center;
		height: 14px;
		padding-right: 9px;
		color: #1a6f8c;
		font-size: 11.5px;
	}

	.grp-foot span {
		flex: 1;
		text-align: center;
		padding-right: 1px;
	}

	/* toolbar strip */
	.toolbar {
		height: 33px;
		flex: none;
		display: flex;
		align-items: center;
		box-sizing: border-box;
		border-bottom: 1px solid #aaa;
		background: #fff;
	}

	.tb-menu {
		width: 93px;
		flex: none;
		height: 26px;
		box-sizing: border-box;
		display: flex;
		align-items: center;
		padding-left: 6px;
		gap: 4px;
		font-size: 11px;
		border-right: 1px solid #ddd;
	}

	.tb-grp {
		flex: none;
		height: 26px;
		box-sizing: border-box;
		display: flex;
		align-items: center;
		gap: 7px;
		border-right: 1px solid #ddd;
	}

	.tb-i.on {
		background: #cbe3ec;
		box-shadow: 0 0 0 3px #cbe3ec;
	}

	.combo {
		height: 23px;
		box-sizing: border-box;
		display: flex;
		align-items: center;
		justify-content: space-between;
		padding: 0 5px 0 2px;
		border: 1px solid #bbb;
		font-size: 11px;
		flex: none;
	}

	.combo em {
		font-style: normal;
	}

	.combo.off {
		color: #aaa;
	}

	.combo.off .caret {
		border-top-color: #aaa;
	}

	.combo.dark {
		border-color: #555;
		font-size: 12px;
	}

	.combo.lead {
		margin-left: 3px;
	}

	/* main */
	.main {
		height: 835px;
		flex: none;
		display: flex;
		position: relative;
	}

	.rail {
		width: 36px;
		flex: none;
		box-sizing: border-box;
		background: #d9d9d9;
		border-right: 1px solid #aaa;
		display: flex;
		flex-direction: column;
	}

	.rail-i {
		display: flex;
		align-items: center;
		justify-content: center;
		box-sizing: border-box;
		flex: none;
	}

	.rail-i.active {
		background: #fff;
		border-top: 1px solid #aaa;
		border-bottom: 1px solid #aaa;
		margin-right: -1px;
	}

	.rail-arrows {
		display: flex;
		flex-direction: column;
		align-items: center;
		justify-content: space-around;
		height: 61px;
	}

	.a {
		width: 0;
		height: 0;
		border: 4px solid transparent;
		position: relative;
	}

	.a.up {
		border-bottom: 4px solid #222;
		border-top: 0;
	}

	.a.dn {
		border-top: 4px solid #222;
		border-bottom: 0;
	}

	.a.dim2 {
		opacity: 0.25;
	}

	.a:not(.short)::after {
		content: '';
		position: absolute;
		left: -4px;
		width: 8px;
		height: 1px;
		background: #222;
	}

	.a.up:not(.short)::after {
		top: -3px;
	}

	.a.dn:not(.short)::after {
		top: 2px;
	}

	.navigator {
		width: 331px;
		flex: none;
		box-sizing: border-box;
		padding: 0 10px 0 7px;
		display: flex;
		flex-direction: column;
		background: #fff;
	}

	.nav-head {
		height: 30px;
		flex: none;
		display: flex;
		align-items: center;
		justify-content: space-between;
		padding: 0 6px 0 3px;
		font-size: 12px;
	}

	.maxbox {
		width: 11px;
		height: 9px;
		border: 1px solid #222;
		border-top-width: 2px;
	}

	.table {
		height: 745px;
		flex: none;
		box-sizing: border-box;
		display: flex;
		flex-direction: column;
		border: 1px solid #e0e0e0;
		border-bottom: 0;
	}

	.row {
		height: 20px;
		flex: none;
		display: flex;
		box-sizing: border-box;
		border-bottom: 1px solid #ededed;
		line-height: 19px;
		font-size: 12.5px;
	}

	.row.head {
		height: 21px;
		background: #f1f1f1;
		border-bottom: 1px solid #ddd;
		font-size: 12px;
	}

	.rows {
		flex: 1;
		min-height: 0;
		overflow: hidden;
	}

	.c1 {
		width: 199px;
		flex: none;
		box-sizing: border-box;
		border-right: 1px solid #111;
	}

	.c2 {
		width: 50px;
		flex: none;
		box-sizing: border-box;
		border-right: 1px solid #e6e6e6;
	}

	.c3 {
		flex: 1;
	}

	.head .c1 {
		padding-left: 6px;
		border-right: 1px solid #ccc;
	}

	.head .c2,
	.head .c3 {
		padding-left: 6px;
		border-right: 1px solid #ddd;
	}

	.node {
		display: flex;
		align-items: center;
		color: #222;
	}

	.lead {
		display: block;
		flex: none;
	}

	.nodetext {
		padding-left: 3px;
		white-space: nowrap;
	}

	.row.sel .nodetext {
		flex: 1;
		align-self: stretch;
		background: #8cbfd0;
		margin-left: 1px;
		padding-left: 3px;
	}

	.row.sel .c2,
	.row.sel .c3 {
		background: #8cbfd0;
	}

	.hscroll {
		height: 16px;
		flex: none;
		display: flex;
		align-items: center;
		background: #efefef;
		color: #444;
		font-size: 17px;
		font-weight: bold;
		line-height: 16px;
	}

	.sarrow {
		width: 17px;
		text-align: center;
	}

	.sarrow.right {
		margin-left: auto;
	}

	.thumb {
		width: 157px;
		height: 16px;
		background: #c9c9c9;
	}

	.splitter {
		height: 4px;
		flex: none;
		margin: 2px 0 0;
		background: #d0d0d0;
		border: 1px solid #aaa;
		box-sizing: border-box;
	}

	.foldrow {
		height: 23px;
		flex: none;
		display: flex;
		align-items: center;
		gap: 9px;
		padding-left: 10px;
		border-bottom: 2px solid #d4d4d4;
		font-size: 14px;
		color: #1a6f8c;
	}

	.foldrow:last-child {
		height: 22px;
	}

	.tri-r {
		width: 0;
		height: 0;
		border: 4px solid transparent;
		border-left: 5px solid #0d6d8f;
		border-right: 0;
	}

	.mini {
		width: 37px;
		flex: none;
		box-sizing: border-box;
		border-left: 1px solid #aaa;
		padding-top: 427px;
		display: flex;
		flex-direction: column;
		align-items: center;
		gap: 5.7px;
		background: #fff;
	}

	.mini hr {
		width: 27px;
		margin: 3px 0 0;
		border: 0;
		border-top: 1px solid #ddd;
	}

	.backtri {
		width: 0;
		height: 0;
		margin: auto auto 6px 7px;
		border: 3.5px solid transparent;
		border-right: 4px solid #222;
		border-left: 0;
	}

	.viewport {
		flex: 1;
		min-width: 0;
		display: flex;
		flex-direction: column;
		background: #1e1e1e;
		border-bottom: 1px solid #aaa;
		overflow: hidden;
	}

	.viewtab {
		height: 26px;
		flex: none;
		box-sizing: border-box;
		background: #fff;
		border-bottom: 2px solid #05709b;
	}

	.scene {
		display: block;
		flex: none;
	}

	.lbl text {
		font-family: 'Liberation Sans', sans-serif;
		font-size: 12px;
		text-anchor: middle;
	}

	/* dialog */
	.dialog {
		position: absolute;
		left: 368px;
		top: 1px;
		width: 328px;
		height: 442px;
		display: flex;
		flex-direction: column;
		background: #efefef;
		box-shadow: 0 0 0 1px #bbb;
	}

	.dlg-title {
		height: 24px;
		flex: none;
		display: flex;
		align-items: center;
		padding: 0 9px 0 6px;
		gap: 7px;
		background: #006a91;
		color: #fff;
		font-size: 14px;
	}

	.dlg-title .ic {
		filter: invert(1);
	}

	.dlg-title span {
		flex: 1;
	}

	.help {
		font: bold 15px/1 'Liberation Sans', sans-serif;
		margin-right: 10px;
	}

	.dlg-body {
		flex: 1;
		display: flex;
		flex-direction: column;
		padding: 4px 6px 0;
		min-height: 0;
	}

	.sec {
		box-sizing: border-box;
		background: #fff;
		flex: none;
		padding: 0 9px;
		height: 162px;
		margin-bottom: 3px;
		border-bottom: 1px solid #ccc;
	}

	.sec.offset {
		height: 63px;
	}

	.sec.desc {
		height: 96px;
	}

	.sec.collapsed {
		height: 24px;
		margin-bottom: 0;
	}

	h4 {
		margin: 0 0 6px -2px;
		height: 24px;
		display: flex;
		align-items: center;
		gap: 9px;
		font-size: 14px;
		font-weight: 400;
		color: #17688a;
	}

	.collapsed h4 {
		height: 24px;
		margin-left: 2px;
		gap: 8px;
	}

	.tri-d {
		width: 0;
		height: 0;
		border: 4.5px solid transparent;
		border-top: 5px solid #0d6d8f;
		border-bottom: 0;
	}

	.f-row {
		display: flex;
		align-items: center;
		justify-content: space-between;
		height: 32px;
		margin-bottom: 2px;
	}

	.f-row > span:first-child {
		padding-top: 4px;
	}

	.f-row.short > span:first-child,
	.f-row > .mat:first-child {
		padding-top: 0;
	}

	.f-row.short {
		height: 24px;
	}

	.mat {
		font-size: 12.5px;
	}

	.f-btns {
		display: flex;
		gap: 2px;
		align-items: center;
	}

	.sq {
		width: 32px;
		height: 32px;
		box-sizing: border-box;
		display: flex;
		align-items: center;
		justify-content: center;
		border: 1px solid #888;
		background: #fff;
	}

	.sq.faded {
		border-color: #ccc;
	}

	.lockbtn {
		width: 24px;
		height: 24px;
		margin-left: 1px;
	}

	.check {
		display: flex;
		align-items: center;
		gap: 5px;
		height: 20px;
	}

	.cbox {
		width: 13px;
		height: 13px;
		box-sizing: border-box;
		border: 1px solid #333;
	}

	.num {
		width: 81px;
		height: 24px;
		box-sizing: border-box;
		border: 1px solid #777;
		padding: 3px 3px 3px 4px;
		display: flex;
	}

	.num span {
		flex: 1;
		background: #0078d7;
		border-left: 1px solid #e8912c;
		color: #fff;
		font: 15px/16px 'Liberation Mono', monospace;
		text-align: right;
		overflow: hidden;
		white-space: nowrap;
	}

	.desc-input {
		box-sizing: border-box;
		height: 23px;
		margin: 0 0 2px 2px;
		padding-left: 4px;
		border: 1px solid #777;
		line-height: 21px;
		font-size: 12.5px;
	}

	.lessrow {
		flex: none;
		height: 17px;
		display: flex;
		align-items: center;
		justify-content: center;
		margin: 1px 0 0;
		border-top: 1px solid #ccc;
		border-bottom: 1px solid #ccc;
		box-sizing: border-box;
	}

	.tri-u {
		width: 0;
		height: 0;
		border: 4.5px solid transparent;
		border-bottom: 5px solid #222;
		border-top: 0;
	}

	.dlg-foot {
		display: flex;
		justify-content: flex-end;
		gap: 5px;
		padding: 7px 10px 0 0;
	}

	.btn {
		box-sizing: border-box;
		width: 54px;
		height: 25px;
		display: flex;
		align-items: center;
		justify-content: center;
		font-size: 12px;
		color: #006a91;
		background: #fff;
		border: 1px solid #006a91;
	}

	.btn.primary {
		background: #006a91;
		color: #fff;
	}

	/* status */
	.status {
		flex: 1;
		display: flex;
		align-items: center;
		color: #222;
		font-size: 11px;
		background: #fff;
		border-top: 1px solid #aaa;
	}

	.current {
		margin-left: 885px;
		font-size: 12px;
		font-weight: 500;
		white-space: nowrap;
	}
</style>
